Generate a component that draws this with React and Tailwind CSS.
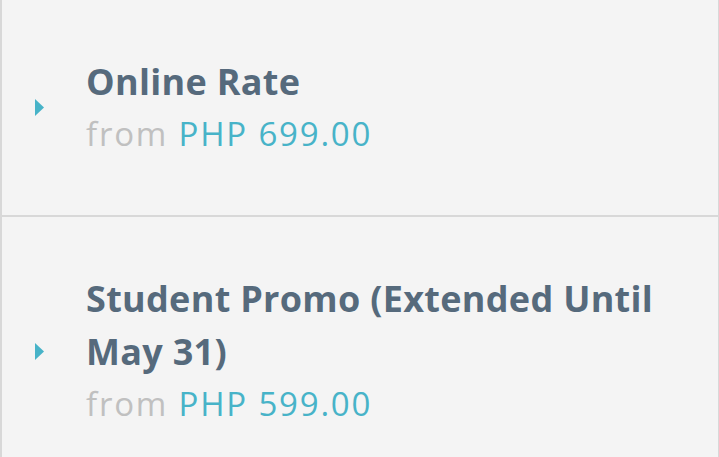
const rates = [
  { name: 'Online Rate', price: 'PHP 699.00' },
  { name: 'Student Promo (Extended Until May 31)', price: 'PHP 599.00' },
]

function Caret() {
  return (
    <svg width="9" height="17" viewBox="0 0 9 17" className="shrink-0">
      <path d="M0 0 L9 8.5 L0 17 Z" fill="#47b3c8" />
    </svg>
  )
}

export default function App() {
  return (
    <div
      className="min-h-screen bg-[#f4f4f4] border-l-2 border-r border-[#d8d8d8]"
      style={{ fontFamily: '"Open Sans", "Liberation Sans", sans-serif' }}
    >
      {rates.map((rate) => (
        <div
          key={rate.name}
          className="flex items-center border-b-2 border-[#d8d8d8] pl-[33px] pr-[30px] pt-[55px] pb-[55px]"
        >
          <Caret />
          <div className="ml-[42px] min-w-0">
            <div className="text-[36px] leading-[53px] font-bold text-[#566a7c] tracking-[0.3px]">{rate.name}</div>
            <div className="text-[33px] leading-[52px] tracking-[1.8px]">
              <span className="text-[#c0c0c0]">from </span>
              <span className="text-[#47b3c8]">{rate.price}</span>
            </div>
          </div>
        </div>
      ))}
    </div>
  )
}
